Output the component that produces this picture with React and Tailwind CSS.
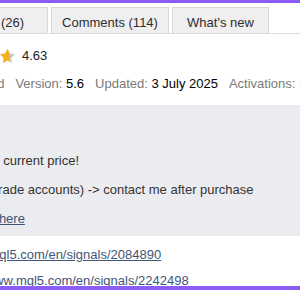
import React from "react";

const STAR =
  "M12 2l3.09 6.26L22 9.27l-5 4.87 1.18 6.88L12 17.77l-6.18 3.25L7 14.14 2 9.27l6.91-1.01L12 2z";

const Star = ({ fill = 1, id }) => (
  <svg width="15" height="14" viewBox="2 2 20 19" className="shrink-0">
    <defs>
      <clipPath id={id}>
        <rect x="2" y="0" width={20 * fill} height="24" />
      </clipPath>
    </defs>
    <path d={STAR} fill="#cacaca" />
    <path d={STAR} fill="#f2b01e" clipPath={`url(#${id})`} />
  </svg>
);

const tabs = [
  { label: "Overview", cls: "w-[70px] justify-center" },
  { label: "Reviews (26)", cls: "w-[100px] justify-end pr-[23px]" },
  { label: "Comments (114)", cls: "w-[118px] justify-center" },
  { label: "What's new", cls: "w-[97px] justify-center" },
];

const info = [
  { label: "Version:", value: "5.6" },
  { label: "Updated:", value: "3 July 2025" },
  { label: "Activations:", value: "10" },
];

export default function App() {
  return (
    <div className="w-[300px] h-[290px] flex flex-col overflow-hidden bg-white text-[13px] leading-[16px] text-[#333] font-['Liberation_Sans',Arial,sans-serif]">
      <div className="h-[3px] shrink-0 bg-[#8b5cf6]" />

      <div className="flex-1 overflow-hidden">
        <div className="-ml-[125px] w-[700px]">
          {/* Tabs */}
          <div className="mt-[4px] flex gap-[3px] border-b border-[#dcdcdc]">
            {tabs.map((t) => (
              <div
                key={t.label}
                className={`h-[26px] flex pt-[7px] border border-b-0 border-[#d9d9d9] bg-[#efefef] text-[#2e2e2e] whitespace-nowrap ${t.cls}`}
              >
                {t.label}
              </div>
            ))}
          </div>

          {/* Rating */}
          <div className="mt-[14px] pl-[65px] flex items-center gap-[7px] h-[16px]">
            <div className="flex">
              <Star id="s1" />
              <Star id="s2" />
              <Star id="s3" />
              <Star id="s4" />
              <Star id="s5" fill={0.63} />
            </div>
            <span className="text-[#222]">4.63</span>
          </div>

          {/* Product info */}
          <div className="mt-[12px] pl-[86px] flex gap-[11px] whitespace-nowrap">
            <span className="text-[#7a7a7a]">Verified</span>
            {info.map((i) => (
              <span key={i.label}>
                <span className="text-[#7a7a7a]">{i.label}</span>{" "}
                <span className="text-black">{i.value}</span>
              </span>
            ))}
          </div>

          {/* Description */}
          <div className="mt-[13px] ml-[60px] pl-[14px] pt-[12px] pb-[3px] bg-[#ebecef] leading-[29px] whitespace-nowrap">
            <p className="font-bold">SALE!</p>
            <p>Grab the current price!</p>
            <p>(for 2-5 trade accounts) -&gt; contact me after purchase</p>
            <p>
              Manual:{" "}
              <a href="#" className="text-[#3f5678] underline">
                here
              </a>
            </p>
          </div>

          {/* Signals */}
          <div className="mt-[5.5px] leading-[26px] whitespace-nowrap">
            <p>
              Signal:{" "}
              <a href="#" className="text-[#3f5678] underline">
                https://www.mql5.com/en/signals/2084890
              </a>
            </p>
            <p>
              New signal:{" "}
              <a href="#" className="text-[#3f5678] underline">
                https://www.mql5.com/en/signals/2242498
              </a>
            </p>
          </div>
        </div>
      </div>

      <div className="h-[4px] shrink-0 bg-[#8b5cf6]" />
    </div>
  );
}
